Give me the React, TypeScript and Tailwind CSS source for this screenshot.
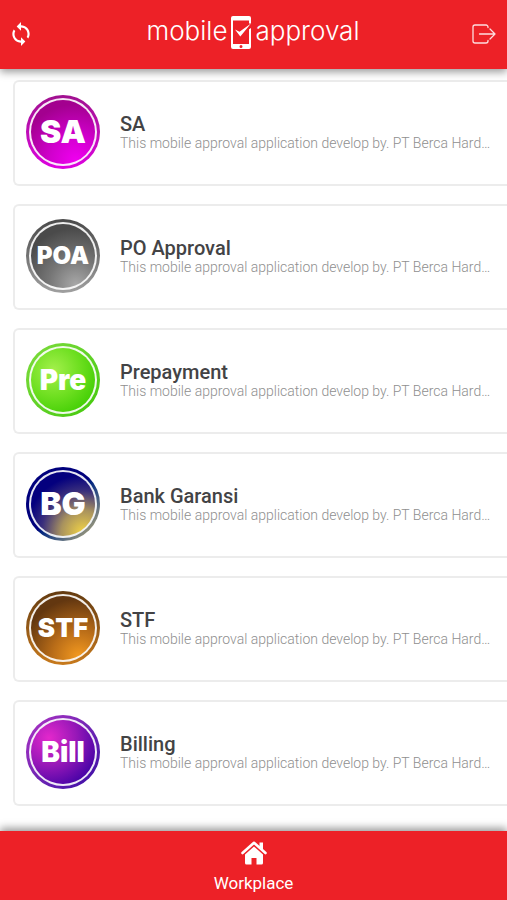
import { MdSync } from 'react-icons/md';
import { clsx } from 'clsx';

interface Workspace {
  badge: string;
  title: string;
  badgeSize: string;
  ring: string;
  fill: string;
}

const DESCRIPTION = 'This mobile approval application develop by. PT Berca Hard…';

const workspaces: Workspace[] = [
  {
    badge: 'SA',
    title: 'SA',
    badgeSize: 'text-[32px]',
    ring: 'bg-linear-to-b from-[#a0108f] to-[#dd00e0]',
    fill: 'bg-[radial-gradient(circle_at_70%_95%,#f000f0_0%,#d000cc_35%,#a3008f_75%)]',
  },
  {
    badge: 'POA',
    title: 'PO Approval',
    badgeSize: 'text-[24px]',
    ring: 'bg-linear-to-b from-[#4a4a4a] to-[#a0a0a0]',
    fill: 'bg-[radial-gradient(circle_at_70%_95%,#a8a8a8_0%,#777777_35%,#4a4a4a_75%)]',
  },
  {
    badge: 'Pre',
    title: 'Prepayment',
    badgeSize: 'text-[28px]',
    ring: 'bg-linear-to-br from-[#7ddc3c] to-[#3fc800]',
    fill: 'bg-[radial-gradient(circle_at_35%_35%,#a4f04c_0%,#6edf20_45%,#3ccc00_85%)]',
  },
  {
    badge: 'BG',
    title: 'Bank Garansi',
    badgeSize: 'text-[32px]',
    ring: 'bg-linear-to-br from-[#00007c] from-50% to-[#d8bc60]',
    fill: 'bg-[radial-gradient(circle_at_82%_95%,#f4d544_0%,#a8925e_28%,#3a2f7c_52%,#04007e_72%)]',
  },
  {
    badge: 'STF',
    title: 'STF',
    badgeSize: 'text-[26px]',
    ring: 'bg-linear-to-b from-[#643b10] to-[#c87a1c]',
    fill: 'bg-[radial-gradient(circle_at_75%_95%,#f49a20_0%,#b86c18_35%,#633710_75%)]',
  },
  {
    badge: 'Bill',
    title: 'Billing',
    badgeSize: 'text-[28px]',
    ring: 'bg-linear-to-br from-[#b030c4] to-[#3800a4]',
    fill: 'bg-[radial-gradient(circle_at_28%_28%,#e428cc_0%,#9818b8_42%,#3c00a4_85%)]',
  },
];

function PhoneMark() {
  return (
    <svg width="20" height="33" viewBox="0 0 20 33" aria-hidden="true">
      <path
        fill="#fff"
        fillRule="evenodd"
        d="M2 0h16a2 2 0 0 1 2 2v29a2 2 0 0 1-2 2H2a2 2 0 0 1-2-2V2a2 2 0 0 1 2-2Zm0 4.500v23.500h16v-23.500Zm8 24.500a1.500 1.500 0 1 0 0 3 1.500 1.500 0 0 0 0-3Z"
      />
      <path d="M17 7.500h3v4.500l-3 2Z" fill="#ed2127" />
      <path d="M4 13.500 8.500 15.800 20 7.500 9.300 20.500Z" fill="#fff" />
    </svg>
  );
}

function LogoutIcon() {
  return (
    <svg width="24" height="20" viewBox="0 0 24 20" fill="none" stroke="#fff" strokeOpacity="0.85" strokeWidth="1.300" strokeLinecap="round" strokeLinejoin="round" aria-hidden="true">
      <path d="M16 3.500V3a2 2 0 0 0-2-2H3a2 2 0 0 0-2 2v14a2 2 0 0 0 2 2h11a2 2 0 0 0 2-2v-.5" />
      <path d="M7.500 10h15.500M18 5l5 5-5 5" />
    </svg>
  );
}

function HomeIcon() {
  return (
    <svg width="26" height="24" viewBox="0 0 26 24" aria-hidden="true">
      <path d="M1.500 12 13 1.800 24.500 12" fill="none" stroke="#fff" strokeWidth="2.600" strokeLinecap="round" strokeLinejoin="round" />
      <path d="M18.500 1.500h3.500v8.500l-3.500-3Z" fill="#fff" />
      <path d="M13 5.600 22 13.600V22a1.500 1.500 0 0 1-1.500 1.500H15.500V17h-5v6.500H5.500A1.500 1.500 0 0 1 4 22v-8.400Z" fill="#fff" />
    </svg>
  );
}

function Badge({ item }: { item: Workspace }) {
  return (
    <div className={clsx('size-[74px] shrink-0 rounded-full p-[3px]', item.ring)}>
      <div className="size-full rounded-full bg-white/90 p-0.5">
        <div className={clsx('flex size-full items-center justify-center rounded-full', item.fill)}>
          <span className={clsx("font-['Inter',sans-serif] leading-none font-black text-white", item.badgeSize)}>
            {item.badge}
          </span>
        </div>
      </div>
    </div>
  );
}

function WorkspaceCard({ item }: { item: Workspace }) {
  return (
    <a href="#" className="flex h-[106px] items-center gap-5 rounded-l-md border-2 border-r-0 border-[#ececec] bg-white pr-2 pb-0.5 pl-[11px]">
      <Badge item={item} />
      <div className="min-w-0 pt-0.5">
        <h2 className="text-[20px] leading-5 font-medium text-[#434345]">{item.title}</h2>
        <p className="truncate text-[14px] leading-[18px] font-light text-[#8f8f8f]">{DESCRIPTION}</p>
      </div>
    </a>
  );
}

export default function App() {
  return (
    <div className="flex min-h-screen flex-col bg-white font-['Roboto',sans-serif]">
      <header className="z-10 flex h-[69px] items-center justify-between bg-[#ed2127] pr-[11px] pb-0.5 pl-2 shadow-[0_3px_8px_rgba(0,0,0,0.4)]">
        <button type="button" aria-label="Refresh" className="text-white">
          <MdSync size={26} />
        </button>
        <h1 className="flex items-center gap-1 pb-0.5 font-['Inter',sans-serif] text-[26px] leading-8 font-light text-white">
          <span className="pb-1">mobile</span>
          <PhoneMark />
          <span className="pb-1">approval</span>
        </h1>
        <button type="button" aria-label="Log out">
          <LogoutIcon />
        </button>
      </header>

      <main className="flex flex-1 flex-col gap-[18px] pt-[11px] pb-6 pl-[13px]">
        {workspaces.map((item) => (
          <WorkspaceCard key={item.title} item={item} />
        ))}
      </main>

      <nav className="z-10 bg-[#ed2127] shadow-[0_-3px_8px_rgba(0,0,0,0.4)]">
        <a href="#" className="flex h-[69px] flex-col items-center gap-2 pt-2.5 text-white">
          <HomeIcon />
          <span className="text-[17px] leading-5">Workplace</span>
        </a>
      </nav>
    </div>
  );
}
